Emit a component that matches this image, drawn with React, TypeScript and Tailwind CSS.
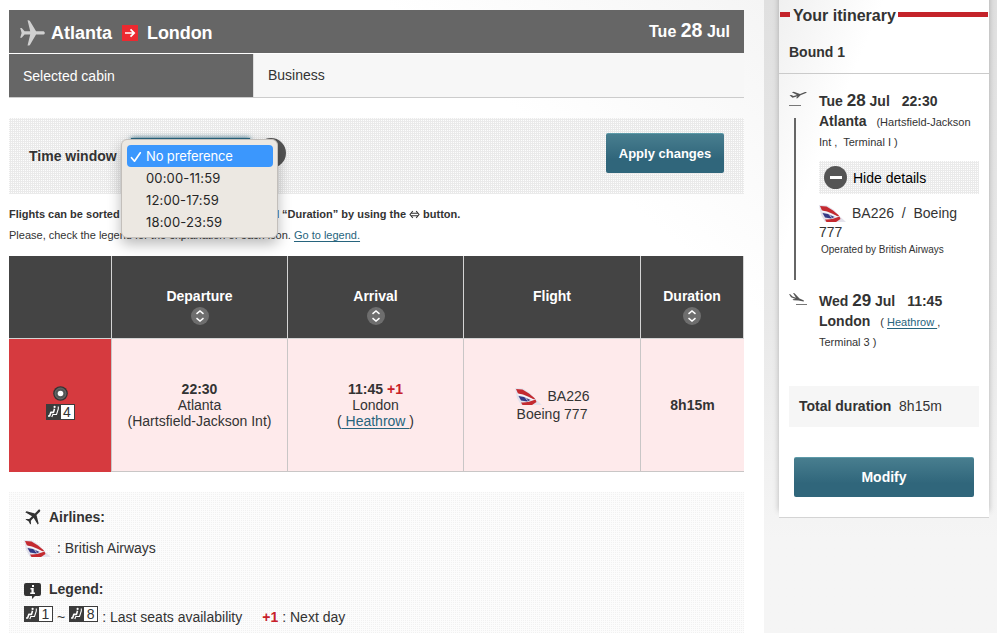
import React from "react";

const DOTS =
  "bg-[#eaeaea] bg-[image:conic-gradient(from_0deg_at_1px_1px,transparent_0_270deg,#fdfdfd_270deg_360deg)] bg-[length:2px_2px]";
const LIGHT_DOTS =
  "bg-[#fcfcfc] bg-[image:conic-gradient(from_0deg_at_1px_1px,transparent_0_270deg,#f1f1f1_270deg_360deg)] bg-[length:2px_2px]";
const BUTTON =
  "flex items-center justify-center rounded-[2px] border-t border-[#5d9aa9] bg-linear-to-b from-[#487e8f] to-[#30667b] to-65% font-bold text-white";

const PLANE =
  "M25 12.9c0-.9-.9-1.600-2-1.600h-6.800L10 .8C9.500.1 8.400 0 7.600.2l2.700 11.100H4.600L1.700 8H.2l1.400 4.900-1.400 4.900h1.500l2.900-3.300h5.700L7.600 25.600c.8.200 1.900.1 2.400-.6l6.200-10.500H23c1.100 0 2-.7 2-1.600z";

function Plane({ className }: { className: string }) {
  return (
    <svg viewBox="0 0 25.200 26" className={className} fill="currentColor">
      <path d={PLANE} />
    </svg>
  );
}

function Tail() {
  return (
    <svg width="27" height="17" viewBox="0 0 27 17" className="shrink-0">
      <path d="M0 0 8 .5 15 5 21 11.500 27 17H6L2 10z" fill="#e3e2ec" />
      <path d="M1 1 7.500 1.500 14 5.500 20 10.500 19 11.500 13 8.500 8 6.500 3 5.500z" fill="#c42a30" />
      <path d="M2.500 6 8 7.500 15 10.500 19 12" fill="none" stroke="#fff" strokeWidth=".8" />
      <path d="M3.500 8 9 9 15.500 12 12 13.500 6 12.500z" fill="#343a86" />
      <path d="M10 9 12.500 12.500" stroke="#c9c9e0" strokeWidth="1" />
      <path d="M6 14.500C11 15 15 13.500 20.500 11.500L21.500 14 17 17H7.500z" fill="#c42a30" />
    </svg>
  );
}

function Seat({ n }: { n: number }) {
  return (
    <span className="flex h-4 w-[29px] shrink-0 border border-[#3c3c3c] bg-white text-[14px] leading-[15px] text-[#333]">
      <svg width="14" height="14" viewBox="0 0 14 14" className="bg-[#3c3c3c]">
        <circle cx="7.600" cy="1.900" r="1.100" fill="#fff" />
        <path d="M7.500 3.800 6.500 7.400H3.800L2.600 11H1" fill="none" stroke="#fff" strokeWidth="1.600" strokeLinejoin="round" />
        <path d="M11.300 1.500V4L9.500 9.500H5.800L4.800 12" fill="none" stroke="#fff" strokeWidth="1.100" />
      </svg>
      <span className="flex-1 text-center">{n}</span>
    </span>
  );
}

function Sort() {
  return (
    <svg width="18" height="18" viewBox="0 0 18 18" className="mt-[1px]">
      <circle cx="9" cy="9" r="9" fill="#6e6e6e" />
      <path d="M5.500 6.900 9 3.900l3.500 3M5.500 11.100 9 14.100l3.500-3" fill="none" stroke="#fff" strokeWidth="1.500" />
    </svg>
  );
}

function Head({ children, sort = true }: { children: string; sort?: boolean }) {
  return (
    <div className="flex flex-col items-center border-l border-[#d4d4d4] pt-[31px] text-[14px] leading-[19px] font-bold text-white">
      {children}
      {sort && <Sort />}
    </div>
  );
}

const CELL = "border-l border-[#c9c6c6] text-center text-[14px] leading-4";

function Flights() {
  return (
    <section className="mt-[11px]">
      <div className="grid h-[83px] grid-cols-[102px_176px_176px_177px_103px] border-r border-b border-[#d4d4d4] bg-[#444]">
        <div />
        <Head>Departure</Head>
        <Head>Arrival</Head>
        <Head sort={false}>Flight</Head>
        <Head>Duration</Head>
      </div>
      <div className="grid h-[133px] grid-cols-[102px_176px_176px_177px_104px] border-b border-[#c9c6c6] bg-[#feeaeb]">
        <div className="-mb-px flex flex-col items-center bg-[#d63a3f] pt-[47px]">
          <svg width="15" height="15" viewBox="0 0 15 15">
            <circle cx="7.500" cy="7.500" r="7.300" fill="#333" />
            <circle cx="7.500" cy="7.500" r="5.500" fill="#555" stroke="#777" strokeWidth=".8" />
            <circle cx="7.500" cy="7.500" r="2.800" fill="#fff" />
          </svg>
          <div className="mt-[3px]"><Seat n={4} /></div>
        </div>
        <div className={`${CELL} pt-[42px]`}>
          <b>22:30</b>
          <div>Atlanta</div>
          <div>(Hartsfield-Jackson Int)</div>
        </div>
        <div className={`${CELL} pt-[42px]`}>
          <b>11:45 <span className="text-[#c8202a]">+1</span></b>
          <div>London</div>
          <div>(<a className="text-[#27647d] underline underline-offset-2">&nbsp;Heathrow&nbsp;</a>)</div>
        </div>
        <div className={`${CELL} pt-[48px]`}>
          <div className="flex h-[18px] items-center justify-center gap-[5px] pl-px">
            <Tail />
            BA226
          </div>
          <div className="mt-px">Boeing 777</div>
        </div>
        <div className={`${CELL} pt-[58px] font-bold`}>8h15m</div>
      </div>
    </section>
  );
}

function TimeMenu() {
  return (
    <div className="absolute top-[21px] left-[112px] z-10 h-[99px] w-[157px] rounded-[6px] border border-[#c3bfbb] bg-[#ece8e2] px-[5px] pt-[5px] pr-[4px] font-[Inter,sans-serif] text-[13px] tracking-[0.15px] text-[#262626] shadow-[0_6px_14px_rgba(0,0,0,0.28)]">
      <div className="flex h-[22px] items-center rounded-[4px] bg-[#3b97fd] pt-px tracking-[-0.13px] text-white">
        <svg width="12" height="12" viewBox="0 0 12 12" className="mr-[4px] ml-[3px]">
          <path d="m1.500 6.700 3 3.500L10.300 1.800" fill="none" stroke="#fff" strokeWidth="1.700" strokeLinecap="round" strokeLinejoin="round" />
        </svg>
        No preference
      </div>
      <div className="h-[22px] pl-[19px] leading-[22px]">00:00-11:59</div>
      <div className="h-[22px] pl-[19px] leading-[22px]">12:00-17:59</div>
      <div className="h-[22px] pl-[19px] leading-[22px]">18:00-23:59</div>
    </div>
  );
}

function Sidebar() {
  return (
    <aside className="h-[518px] w-[210px] shrink-0 border-b border-[#d4d4d4] bg-linear-to-br from-[#f0f0f0] to-white to-25% shadow-[0_-7px_6px_rgba(0,0,0,0.25)]">
      <div className="flex h-[31px] px-px text-[16px] leading-[31px] font-bold">
        <span className="mt-3 h-[5px] w-[10px] bg-[#c4232a]" />
        <h2 className="w-[108px] pl-[3px] whitespace-nowrap">Your itinerary</h2>
        <span className="mt-3 h-[5px] flex-1 bg-[#c4232a]" />
      </div>
      <h3 className="h-[43px] border-b border-[#cbcbcb] pl-[10px] text-[14px] leading-[43px] font-bold">Bound 1</h3>
      <div className="flex h-[207px] pl-[10px]">
        <div className="w-[30px] pt-[17px]">
          <svg width="18" height="16" viewBox="0 0 18 16">
            <path d="M.5 4.200 2.200 4 4.500 5 8 4.100 2.800 1.300 4.800.8 11 3 16 1Q18 .6 17.600 1.700L11.500 4.300 8.500 7.200H7L8.500 5.200 3.500 6.700z" fill="#555" />
            <path d="M0 14.500h12" stroke="#777" />
          </svg>
          <div className="mt-[11px] ml-[5px] h-[162px] w-[2px] bg-[#666]" />
        </div>
        <div className="w-[160px] pt-[17px] text-[14px] leading-[20px]">
          <div className="h-5 leading-[19px] font-bold whitespace-nowrap">Tue <span className="text-[17px]">28</span> Jul <span className="ml-2">22:30</span></div>
          <div className="flex h-[21px] items-baseline gap-[10px] text-[11px] leading-[21px] whitespace-nowrap">
            <b className="text-[14px]">Atlanta</b>
            <span>(Hartsfield-Jackson</span>
          </div>
          <div className="h-[29px] text-[11px] leading-[20px]">Int ,&nbsp; Terminal I )</div>
          <div className={`${DOTS} flex h-[33px] items-center gap-[6px] pl-[5px] text-black`}>
            <svg width="23" height="23" viewBox="0 0 23 23">
              <circle cx="11.500" cy="11.500" r="11.500" fill="#555" />
              <path d="M6 11.500h12" stroke="#fff" strokeWidth="3" />
            </svg>
            Hide details
          </div>
          <div className="mt-[10px] flex h-[18px] items-center gap-[6px] whitespace-pre"><Tail />BA226  /  Boeing</div>
          <div className="mt-px h-[18px] leading-[19px]">777</div>
          <div className="pl-[2px] text-[10px] leading-[17px] whitespace-nowrap">Operated by British Airways</div>
        </div>
      </div>
      <div className="flex h-[105px] pl-[10px]">
        <svg width="30" height="14" viewBox="0 0 30 14" className="mt-[11px]">
          <path d="M0 2 1.300 2.200 3.500 4.600 7 5.700 4 1 5.500 1.300 10.500 6.600 14.500 8.200Q15.600 9 14.500 9.600L9.500 8.400 4.500 8.300 3.500 7.200 6.500 7 2 5.200z" fill="#555" />
          <path d="M7 12.500h11" stroke="#777" />
        </svg>
        <div className="pt-[10px] text-[11px] leading-[21px] whitespace-nowrap">
          <div className="h-5 text-[14px] leading-[19px] font-bold">Wed <span className="text-[17px]">29</span> Jul <span className="ml-2">11:45</span></div>
          <div className="flex h-[21px] items-baseline gap-[10px]">
            <b className="text-[14px]">London</b>
            <span>( <a className="text-[#27647d] underline underline-offset-2">Heathrow&nbsp;</a>,</span>
          </div>
          <div className="leading-5">Terminal 3 )</div>
        </div>
      </div>
      <div className="mx-[10px] h-[41px] bg-[#f6f6f6] pl-[10px] text-[14px] leading-[41px]"><b>Total duration</b>&nbsp; 8h15m</div>
      <button className={`${BUTTON} mt-[30px] ml-[15px] h-[40px] w-[180px] text-[14px]`}>Modify</button>
    </aside>
  );
}

export default function App() {
  return (
    <div className="flex h-[633px] w-[997px] overflow-hidden bg-linear-to-b from-[#e0e0e0] via-[#e9e9e9] to-[#f5f5f5] to-85% font-['Liberation_Sans',Arial,sans-serif] text-[#333]">
      <main className="mr-[15px] h-[633px] w-[764px] shrink-0 bg-white bg-linear-to-bl from-[#f5f5f5] to-white to-25% pt-[10px] pr-[20px] pl-[9px]">
        <header className="flex h-[43px] items-center bg-[#666] pr-[14px] pl-[11px] text-[18px] font-bold text-white">
          <Plane className="mt-[3px] h-[26px] w-[25px] text-[#d0d0d0]" />
          <span className="mt-[3px] ml-[6px]">Atlanta</span>
          <svg width="16" height="16" viewBox="0 0 16 16" className="mt-[3px] mr-[9px] ml-[10px]">
            <path d="M0 0h16v16H0z" fill="#ec2930" />
            <path d="M3 8h9M8.500 4.300 12.200 8 8.500 11.700" fill="none" stroke="#fff" strokeWidth="1.700" />
          </svg>
          <span className="mt-[3px] tracking-[-0.08px]">London</span>
          <span className="mb-[2px] ml-auto text-[16px]">Tue <span className="text-[19.500px]">28</span> Jul</span>
        </header>
        <div className="mt-px flex h-[44px] border-b border-[#ccc] bg-[#f7f7f7] text-[14px] leading-[43px]">
          <div className="w-[245px] border-r border-[#ddd] bg-[#666] pl-[14px] leading-[45px] text-white">Selected cabin</div>
          <div className="pl-[14px]">Business</div>
        </div>
        <section className={`${DOTS} relative mt-5 flex h-[76px] pl-[20px]`}>
          <span className="text-[14px] leading-[76px] font-bold">Time window</span>
          <span className="mt-5 ml-[14px] h-7 w-[119px] border border-[#27647d] bg-white shadow-[0_0_5px_#27647d]" />
          <span className="mt-5 ml-[6px] h-[30px] w-[30px] rounded-full bg-[#555]" />
          <button className={`${BUTTON} mt-[15px] mr-[20px] ml-auto h-10 w-[118px] text-[13px]`}>Apply changes</button>
          <TimeMenu />
        </section>
        <p className="mt-[10px] flex h-[21px] text-[11px] leading-[21px] font-bold whitespace-nowrap">
          <span className="mr-[3px] flex w-[270px] justify-between"><span>Flights can be sorted</span><span className="tracking-[-0.3px]">by “Departure”, “Arrival” and</span></span>
          “Duration” by using the
          <svg width="11" height="9" viewBox="0 0 11 9" className="mx-[3px] mt-[6px]">
            <path d="M2 3.200h7M2 5.800h7M3.800 1 1 4.500 3.800 8M7.200 1 10 4.500 7.200 8" fill="none" stroke="#333" strokeWidth="1.100" />
          </svg>
          button.
        </p>
        <p className="h-5 text-[11px] leading-[21px] whitespace-nowrap">Please, check the legend for the explanation of each icon. <a className="text-[#27647d] underline underline-offset-2">Go to legend.</a></p>
        <Flights />
        <section className={`${LIGHT_DOTS} mt-5 h-[142px] pt-[15px] pl-[15px] text-[14px]`}>
          <h3 className="flex h-[21px] items-center font-bold">
            <Plane className="mb-1 ml-[1px] h-[18px] w-[18px] -rotate-45 text-[#333]" />
            <span className="ml-[6px]">Airlines:</span>
          </h3>
          <div className="mt-[10px] flex h-[21px] items-center"><Tail /><span className="ml-[6px]">: British Airways</span></div>
          <h3 className="mt-[20px] flex h-[21px] items-center font-bold">
            <svg width="17" height="16" viewBox="0 0 17 16" className="mt-[2px]">
              <path d="M2 0h13q2 0 2 2v9q0 2-2 2h-4l-3 3v-3H2q-2 0-2-2V2q0-2 2-2z" fill="#333" />
              <path d="M8 2h2v2H8zM6.500 5h3.200v4.500H11V11H6.200V9.500h1.300v-3h-1z" fill="#fff" />
            </svg>
            <span className="ml-2">Legend:</span>
          </h3>
          <div className="mt-[6px] flex h-[21px] items-start">
            <Seat n={1} />
            <span className="mx-[4px] leading-[23px]">~</span>
            <Seat n={8} />
            <span className="ml-[4px] leading-[23px]">: Last seats availability</span>
            <b className="ml-5 leading-[23px] text-[#c8202a]">+1</b>
            <span className="ml-1 leading-[23px]">: Next day</span>
          </div>
        </section>
      </main>
      <Sidebar />
    </div>
  );
}
